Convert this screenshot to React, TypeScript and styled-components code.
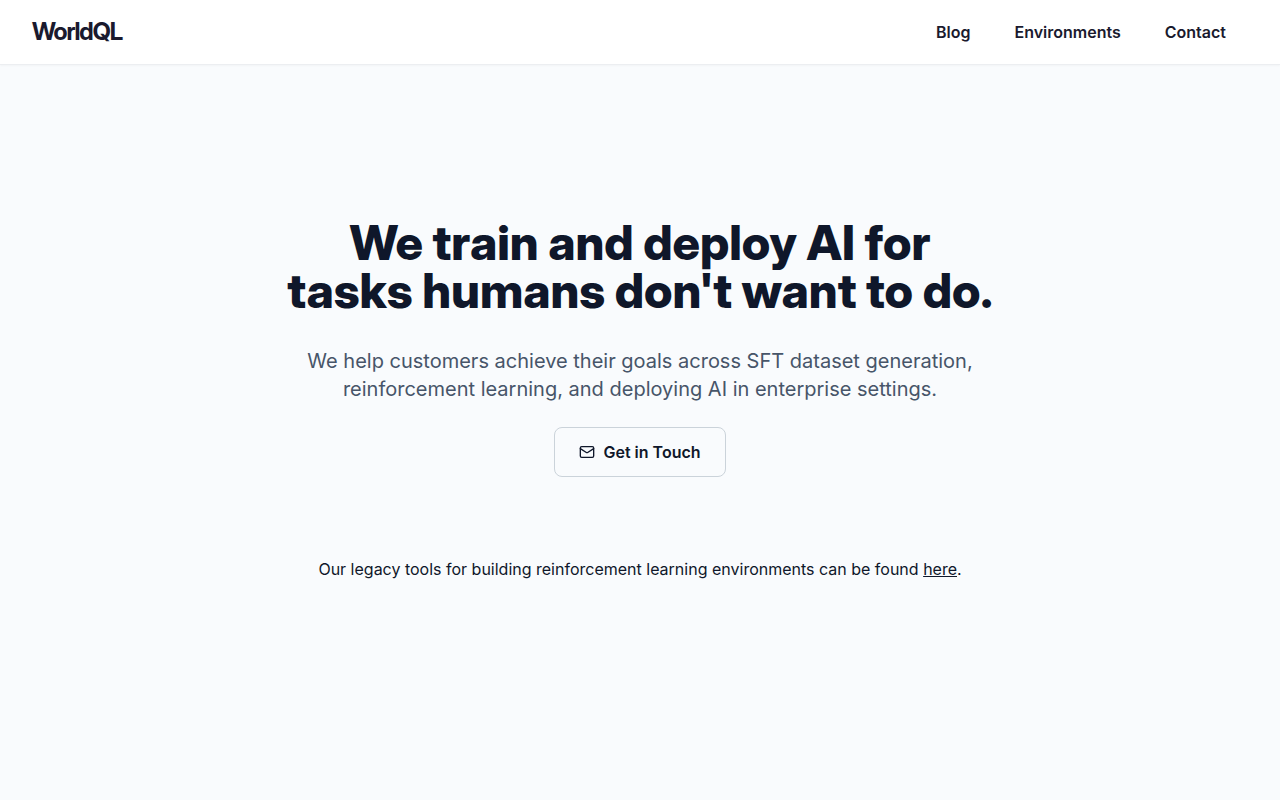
import React from "react";
import styled, { createGlobalStyle } from "styled-components";
import { Mail } from "lucide-react";

const GlobalStyle = createGlobalStyle`
  *, *::before, *::after { box-sizing: border-box; }
  body {
    margin: 0;
    background: #f9fbfd;
    color: #0f172a;
    font-family: Inter, sans-serif;
    font-size: 16px;
    line-height: 24px;
  }
`;

const Page = styled.div`
  display: flex;
  flex-direction: column;
  min-height: 100vh;
`;

const Header = styled.header`
  display: flex;
  align-items: center;
  justify-content: space-between;
  height: 65px;
  padding: 0 34px 0 32px;
  background: #ffffff;
  border-bottom: 1px solid #eceef1;
  box-shadow: 0 1px 2px rgba(0, 0, 0, 0.03);
`;

const Logo = styled.a`
  color: #1a1a2e;
  font-family: "Inter Display", Inter, sans-serif;
  font-size: 24px;
  line-height: 32px;
  font-weight: 700;
  letter-spacing: -1px;
  text-decoration: none;
`;

const Nav = styled.nav`
  display: flex;
  gap: 4px;
`;

const NavLink = styled.a`
  padding: 8px 20px;
  color: #1a1a2e;
  font-weight: 600;
  text-decoration: none;
`;

const Hero = styled.main`
  display: flex;
  flex-direction: column;
  align-items: center;
  padding: 154px 24px 48px;
  text-align: center;
`;

const Title = styled.h1`
  max-width: 768px;
  margin: 0 0 32px;
  font-family: "Inter Display", Inter, sans-serif;
  font-size: 48px;
  line-height: 48px;
  font-weight: 800;
`;

const Lead = styled.p`
  max-width: 672px;
  margin: 0 0 24px;
  color: #475569;
  font-size: 20px;
  line-height: 28px;
`;

const ContactButton = styled.button`
  display: inline-flex;
  align-items: center;
  gap: 8px;
  height: 50px;
  padding: 0 24px;
  border: 1px solid #cbd3da;
  border-radius: 8px;
  background: transparent;
  color: #0f172a;
  font: inherit;
  font-weight: 600;
  cursor: pointer;
`;

const Note = styled.p`
  margin: 80px 0 0;

  a {
    color: inherit;
    text-decoration: underline;
  }
`;

const links = ["Blog", "Environments", "Contact"];

export default function App() {
  return (
    <Page>
      <GlobalStyle />
      <Header>
        <Logo href="#">WorldQL</Logo>
        <Nav>
          {links.map((label) => (
            <NavLink key={label} href={`#${label.toLowerCase()}`}>{label}</NavLink>
          ))}
        </Nav>
      </Header>
      <Hero>
        <Title>We train and deploy AI for<br />tasks humans don't want to do.</Title>
        <Lead>We help customers achieve their goals across SFT dataset generation, reinforcement learning, and deploying AI in enterprise settings.</Lead>
        <ContactButton type="button">
          <Mail size={16} aria-hidden="true" />
          Get in Touch
        </ContactButton>
        <Note>
          Our legacy tools for building reinforcement learning environments can be found <a href="#legacy">here</a>.
        </Note>
      </Hero>
    </Page>
  );
}
